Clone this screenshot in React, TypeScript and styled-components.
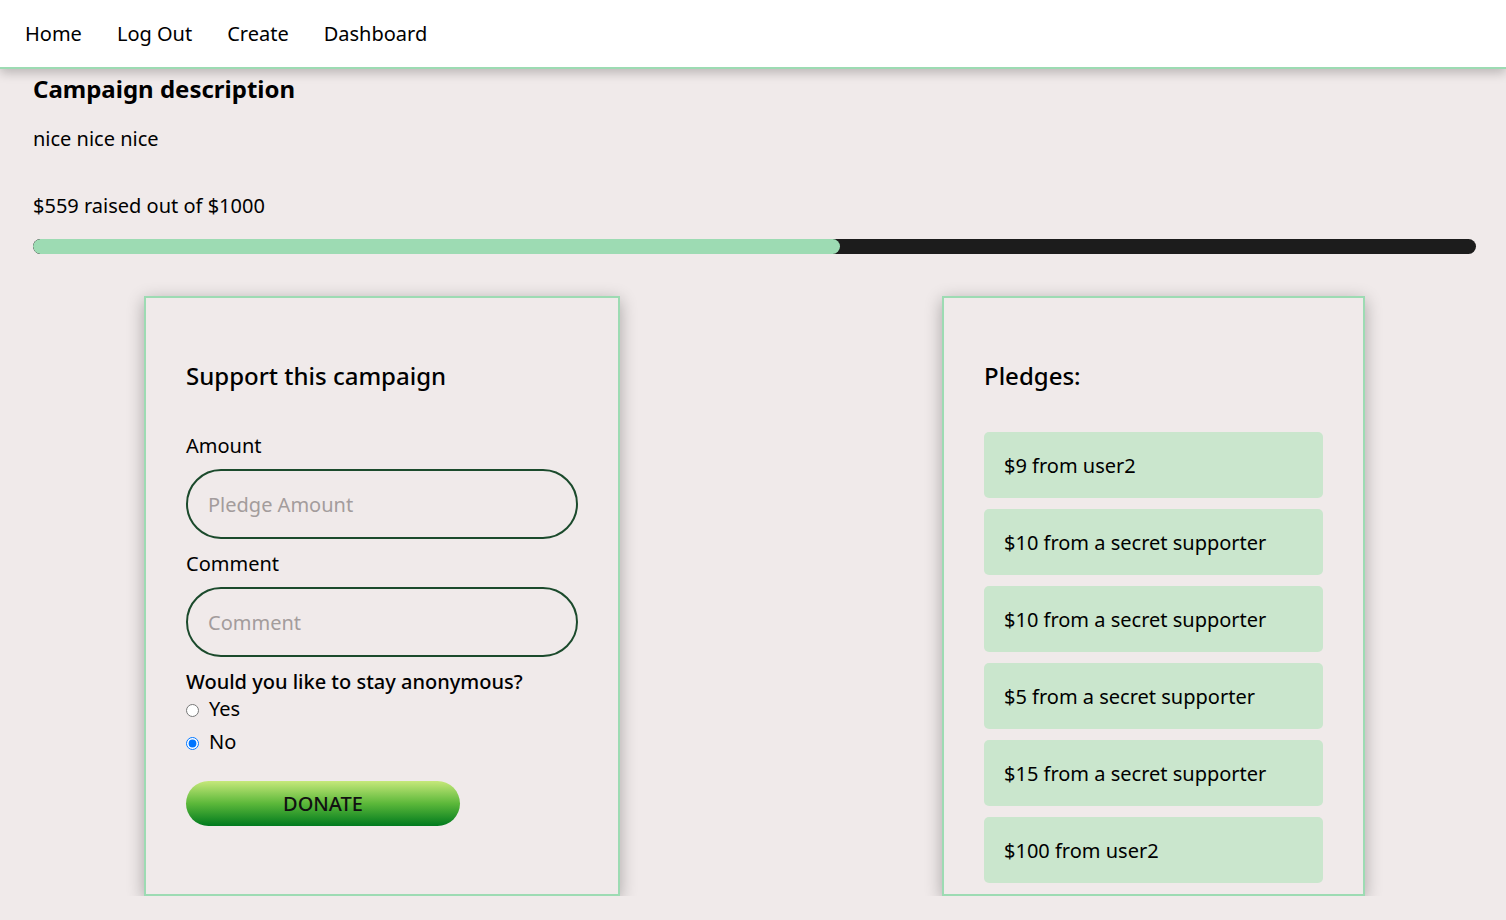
import React from "react";
import styled, { createGlobalStyle } from "styled-components";

const GlobalStyle = createGlobalStyle`
  html, body { margin: 0; padding: 0; }
  body {
    background: #f0eaea;
    font-family: "Noto Sans", "Open Sans", sans-serif;
    font-size: 20px;
    color: #000;
  }
  * { box-sizing: border-box; }
`;

const NavBar = styled.nav`
  position: relative;
  z-index: 1;
  height: 69px;
  background: #ffffff;
  border-bottom: 2px solid #9ddbb3;
  box-shadow: 0 4px 10px rgba(0, 0, 0, 0.22);
  display: flex;
  align-items: center;
  gap: 35px;
  padding: 0 25px;
`;

const NavLink = styled.a`
  font-size: 20px;
  color: #000;
  text-decoration: none;
  line-height: 1;
`;

const Main = styled.main`
  padding: 3px 30px 0 33px;
`;

const Title = styled.h1`
  margin: 0;
  font-size: 24px;
  font-weight: 700;
  line-height: 33px;
`;

const Paragraph = styled.p<{ $gap: number }>`
  margin: ${(p) => p.$gap}px 0 0;
  font-size: 20px;
  line-height: 27px;
`;

const Track = styled.div`
  margin-top: 20px;
  height: 15px;
  border-radius: 8px;
  background: #1c1c1c;
  overflow: hidden;
`;

const Fill = styled.div`
  height: 100%;
  background: #9ddbb3;
  border-radius: 8px;
`;

const CardRow = styled.section`
  display: flex;
  gap: 322px;
  margin-top: 42px;
  padding-left: 111px;
`;

const Card = styled.div<{ $width: number }>`
  width: ${(p) => p.$width}px;
  height: 600px;
  border: 2px solid #9ddbb3;
  box-shadow: 0 4px 16px rgba(0, 0, 0, 0.3);
  padding: 61px 40px 40px;
  overflow: hidden;
  display: flex;
  flex-direction: column;
`;

const CardTitle = styled.h2`
  margin: 0 0 40px;
  font-size: 24px;
  font-weight: 500;
  line-height: 33px;
`;

const Label = styled.label`
  display: block;
  font-size: 20px;
  line-height: 27px;
  margin-bottom: 10px;
`;

const TextInput = styled.input`
  width: 100%;
  height: 70px;
  border: 2px solid #1b4a2c;
  border-radius: 35px;
  background: transparent;
  padding: 0 20px;
  font-family: inherit;
  font-size: 20px;
  margin-bottom: 11px;
  outline: none;
  &::placeholder { color: #a39c9c; }
`;

const Question = styled.div`
  font-size: 20px;
  font-weight: 500;
  line-height: 27px;
`;

const RadioRow = styled.label<{ $top: number }>`
  display: flex;
  align-items: center;
  margin-top: ${(p) => p.$top}px;
  font-size: 20px;
  line-height: 27px;
`;

const Radio = styled.input`
  width: 13px;
  height: 13px;
  margin: 3px 10px 0 0;
`;

const DonateButton = styled.button`
  margin-top: 26px;
  width: 274px;
  height: 45px;
  border: none;
  border-radius: 23px;
  background: linear-gradient(to bottom, #c6e87a 0%, #5cb83a 50%, #007a1e 100%);
  font-family: inherit;
  font-size: 20px;
  font-weight: 500;
  color: #111;
  cursor: pointer;
`;

const PledgeList = styled.ul`
  list-style: none;
  margin: 0;
  padding: 0;
  display: flex;
  flex-direction: column;
  gap: 11px;
`;

const Pledge = styled.li`
  height: 66px;
  flex-shrink: 0;
  background: #cae6cd;
  border-radius: 5px;
  padding: 0 20px;
  display: flex;
  align-items: center;
  font-size: 20px;
`;

const pledges = [
  "$9 from user2",
  "$10 from a secret supporter",
  "$10 from a secret supporter",
  "$5 from a secret supporter",
  "$15 from a secret supporter",
  "$100 from user2",
];

export default function App() {
  const raised = 559;
  const goal = 1000;
  return (
    <>
      <GlobalStyle />
      <NavBar>
        <NavLink href="#">Home</NavLink>
        <NavLink href="#">Log Out</NavLink>
        <NavLink href="#">Create</NavLink>
        <NavLink href="#">Dashboard</NavLink>
      </NavBar>
      <Main>
        <Title>Campaign description</Title>
        <Paragraph $gap={20}>nice nice nice</Paragraph>
        <Paragraph $gap={40}>
          ${raised} raised out of ${goal}
        </Paragraph>
        <Track>
          <Fill style={{ width: `${(raised / goal) * 100}%` }} />
        </Track>
        <CardRow>
          <Card $width={476}>
            <CardTitle>Support this campaign</CardTitle>
            <Label>Amount</Label>
            <TextInput placeholder="Pledge Amount" />
            <Label>Comment</Label>
            <TextInput placeholder="Comment" />
            <Question>Would you like to stay anonymous?</Question>
            <RadioRow $top={0}>
              <Radio type="radio" name="anon" />
              Yes
            </RadioRow>
            <RadioRow $top={6}>
              <Radio type="radio" name="anon" defaultChecked />
              No
            </RadioRow>
            <DonateButton>DONATE</DonateButton>
          </Card>
          <Card $width={423}>
            <CardTitle>Pledges:</CardTitle>
            <PledgeList>
              {pledges.map((p, i) => (
                <Pledge key={i}>{p}</Pledge>
              ))}
            </PledgeList>
          </Card>
        </CardRow>
      </Main>
    </>
  );
}
